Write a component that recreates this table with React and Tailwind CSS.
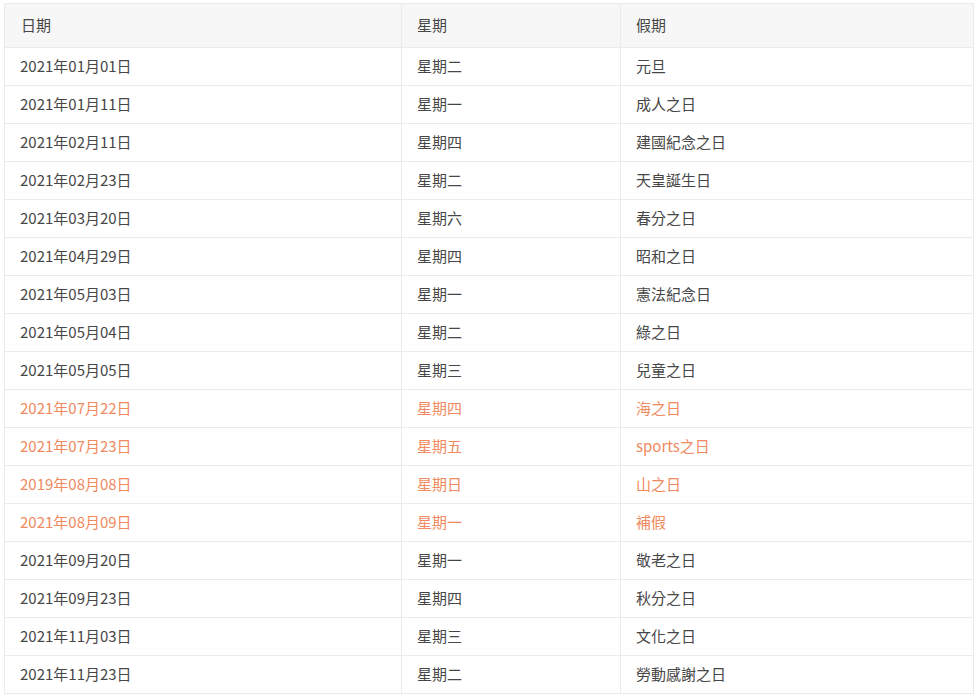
import React from "react";

const rows = [
  ["2021年01月01日", "星期二", "元旦", false],
  ["2021年01月11日", "星期一", "成人之日", false],
  ["2021年02月11日", "星期四", "建國紀念之日", false],
  ["2021年02月23日", "星期二", "天皇誕生日", false],
  ["2021年03月20日", "星期六", "春分之日", false],
  ["2021年04月29日", "星期四", "昭和之日", false],
  ["2021年05月03日", "星期一", "憲法紀念日", false],
  ["2021年05月04日", "星期二", "綠之日", false],
  ["2021年05月05日", "星期三", "兒童之日", false],
  ["2021年07月22日", "星期四", "海之日", true],
  ["2021年07月23日", "星期五", "sports之日", true],
  ["2019年08月08日", "星期日", "山之日", true],
  ["2021年08月09日", "星期一", "補假", true],
  ["2021年09月20日", "星期一", "敬老之日", false],
  ["2021年09月23日", "星期四", "秋分之日", false],
  ["2021年11月03日", "星期三", "文化之日", false],
  ["2021年11月23日", "星期二", "勞動感謝之日", false],
];

export default function App() {
  return (
    <div
      className="bg-white w-[978px] h-[698px] pt-[3px] pl-[4px]"
      style={{ fontFamily: '"Noto Sans CJK TC", "Noto Sans", sans-serif' }}
    >
      <table className="w-[970px] border-collapse table-fixed text-[15px] text-[#474747]">
        <colgroup>
          <col className="w-[397px]" />
          <col className="w-[219px]" />
          <col />
        </colgroup>
        <thead>
          <tr className="bg-[#f7f7f7] h-[44px]">
            <th className="border border-[#ebebeb] text-left font-normal pl-[16px] p-0">日期</th>
            <th className="border border-[#ebebeb] text-left font-normal pl-[15px] p-0">星期</th>
            <th className="border border-[#ebebeb] text-left font-normal pl-[15px] p-0">假期</th>
          </tr>
        </thead>
        <tbody>
          {rows.map(([d, w, h, hi], i) => (
            <tr key={i} className={"h-[38px] " + (hi ? "text-[#f08a60]" : "")}>
              <td className="border border-[#ebebeb] pl-[15px] p-0">{d}</td>
              <td className="border border-[#ebebeb] pl-[15px] p-0">{w}</td>
              <td className="border border-[#ebebeb] pl-[15px] p-0">{h}</td>
            </tr>
          ))}
        </tbody>
      </table>
    </div>
  );
}
